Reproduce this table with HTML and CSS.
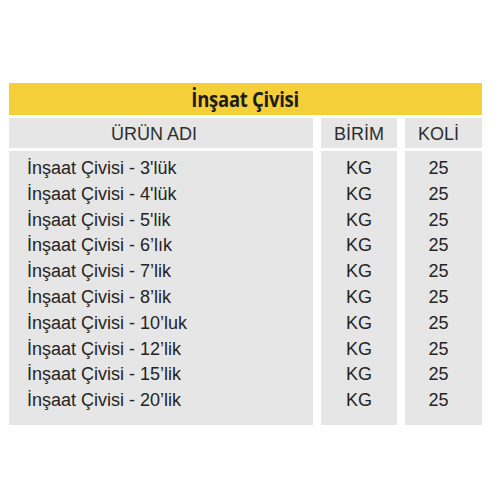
FILE: index.html
```html
<!DOCTYPE html>
<html lang="tr">
<head>
<meta charset="utf-8">
<title>İnşaat Çivisi</title>
<link rel="stylesheet" href="styles.css">
</head>
<body>
<div class="sheet">
  <div class="title"><span>İnşaat Çivisi</span></div>
  <div class="table">
    <div class="cell head name">ÜRÜN ADI</div>
    <div class="cell head unit">BİRİM</div>
    <div class="cell head qty">KOLİ</div>
    <div class="cell body name">
      <div>İnşaat Çivisi - 3'lük</div>
      <div>İnşaat Çivisi - 4'lük</div>
      <div>İnşaat Çivisi - 5'lik</div>
      <div>İnşaat Çivisi - 6’lık</div>
      <div>İnşaat Çivisi - 7’lik</div>
      <div>İnşaat Çivisi - 8’lik</div>
      <div>İnşaat Çivisi - 10’luk</div>
      <div>İnşaat Çivisi - 12’lik</div>
      <div>İnşaat Çivisi - 15’lik</div>
      <div>İnşaat Çivisi - 20’lik</div>
    </div>
    <div class="cell body unit">
      <div>KG</div><div>KG</div><div>KG</div><div>KG</div><div>KG</div>
      <div>KG</div><div>KG</div><div>KG</div><div>KG</div><div>KG</div>
    </div>
    <div class="cell body qty">
      <div>25</div><div>25</div><div>25</div><div>25</div><div>25</div>
      <div>25</div><div>25</div><div>25</div><div>25</div><div>25</div>
    </div>
  </div>
</div>
</body>
</html>
```
FILE: styles.css
```css
html, body {
  margin: 0;
  padding: 0;
  background: #ffffff;
}

.sheet {
  padding: 83px 18px 0 9px;
  font-family: "Liberation Sans", Arial, sans-serif;
  color: #242424;
}

.title {
  height: 32px;
  background: #f5cf3a;
  display: flex;
  align-items: center;
  justify-content: center;
}

.title span {
  display: inline-block;
  font-family: "Open Sans", "DejaVu Sans", sans-serif;
  font-weight: bold;
  font-size: 21px;
  letter-spacing: -0.3px;
  color: #1c1c1c;
  line-height: 32px;
  transform: scaleX(0.88);
}

.table {
  margin-top: 3px;
  display: grid;
  grid-template-columns: 304px 76px 77px;
  column-gap: 8px;
  row-gap: 3px;
}

.cell {
  background: #e6e6e6;
  font-size: 18px;
}

.head {
  padding-top: 2px;
  line-height: 28px;
  text-align: center;
  color: #2e2e2e;
}

.head.name {
  padding-right: 14px;
}

.body {
  padding: 5px 0 11px;
  line-height: 25.8px;
}

.body.name {
  padding-left: 18px;
}

.unit, .qty {
  text-align: center;
}

.head.qty, .body.qty {
  padding-right: 10px;
}
```
